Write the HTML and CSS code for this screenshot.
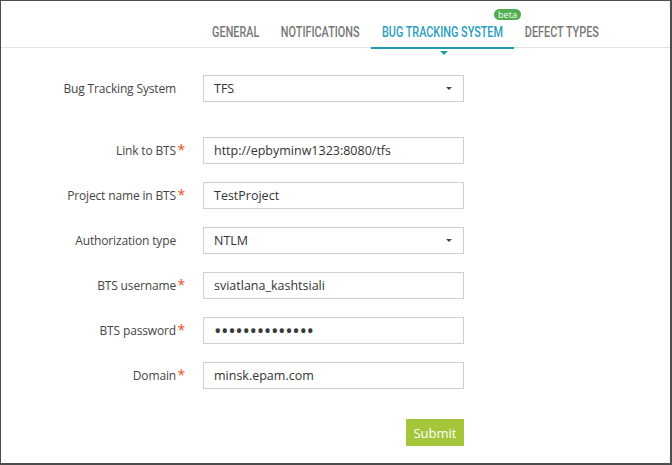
FILE: index.html
```html
<!DOCTYPE html>
<html>
<head>
<meta charset="utf-8">
<link rel="stylesheet" href="styles.css">
</head>
<body>
<div class="frame">
  <div class="header">
    <nav class="tabs">
      <a class="tab t-general"><span class="tab-text">GENERAL</span></a>
      <a class="tab t-notif"><span class="tab-text">NOTIFICATIONS</span></a>
      <a class="tab t-bts active"><span class="tab-text">BUG TRACKING SYSTEM</span><span class="beta">beta</span><span class="caret"></span></a>
      <a class="tab t-defect"><span class="tab-text">DEFECT TYPES</span></a>
    </nav>
  </div>
  <form class="form">
    <div class="row first">
      <label class="label">Bug Tracking System<span class="req"></span></label>
      <div class="field select"><span>TFS</span><span class="arrow"></span></div>
    </div>
    <div class="row">
      <label class="label">Link to BTS<span class="req">*</span></label>
      <div class="field"><span>http://epbyminw1323:8080/tfs</span></div>
    </div>
    <div class="row">
      <label class="label">Project name in BTS<span class="req">*</span></label>
      <div class="field"><span>TestProject</span></div>
    </div>
    <div class="row">
      <label class="label">Authorization type<span class="req"></span></label>
      <div class="field select"><span>NTLM</span><span class="arrow"></span></div>
    </div>
    <div class="row">
      <label class="label">BTS username<span class="req">*</span></label>
      <div class="field"><span>sviatlana_kashtsiali</span></div>
    </div>
    <div class="row">
      <label class="label">BTS password<span class="req">*</span></label>
      <div class="field"><span class="dots">••••••••••••••</span></div>
    </div>
    <div class="row">
      <label class="label">Domain<span class="req">*</span></label>
      <div class="field"><span>minsk.epam.com</span></div>
    </div>
    <div class="actions">
      <button type="button" class="submit">Submit</button>
    </div>
  </form>
</div>
</body>
</html>
```
FILE: styles.css
```css
* { box-sizing: border-box; }
html, body { margin: 0; padding: 0; background: #fff; }
.frame {
  width: 672px;
  height: 465px;
  border-style: solid;
  border-color: #4d4d4d;
  border-width: 1px 2px 2px 1px;
  font-family: "Open Sans", "Liberation Sans", sans-serif;
  background: #fff;
}
.header {
  height: 47px;
  border-bottom: 1px solid #e2e2e2;
}
.tabs {
  display: flex;
  height: 46px;
  padding-left: 201px;
}
.tab {
  position: relative;
  display: flex;
  align-items: flex-end;
  justify-content: center;
  height: 48px;
  padding: 0 0 6px;
  font-family: Roboto, "DejaVu Sans", sans-serif;
  font-size: 15.5px;
  font-weight: 500;
  color: #767676;
  border-bottom: 2px solid transparent;
  white-space: nowrap;
}
.tab-text {
  display: inline-block;
  transform: scaleX(0.7);
  transform-origin: 50% 50%;
}
.t-general { width: 68px; }
.t-notif { width: 101px; }
.t-bts { width: 143px; }
.t-defect { width: 95px; }
.tab.active {
  color: #2aa0bf;
  border-bottom-color: #1c9bb0;
}
.beta {
  position: absolute;
  top: 8px;
  left: 123px;
  width: 27px;
  height: 11px;
  border-radius: 6px;
  background: #4fae4f;
  color: #fff;
  font-family: "Open Sans", sans-serif;
  font-weight: 400;
  font-size: 9px;
  line-height: 11px;
  text-align: center;
}
.caret {
  position: absolute;
  left: 69px;
  bottom: -8px;
  width: 0;
  height: 0;
  border-left: 4px solid transparent;
  border-right: 4px solid transparent;
  border-top: 4px solid #1c9bb0;
}
.form {
  padding-top: 27px;
  display: flex;
  flex-direction: column;
  gap: 18px;
}
.row {
  display: grid;
  grid-template-columns: 184px 261px;
  column-gap: 18px;
  align-items: center;
  height: 27px;
}
.row.first { margin-bottom: 17px; }
.label {
  text-align: right;
  font-size: 12px;
  letter-spacing: -0.15px;
  color: #454545;
  white-space: nowrap;
}
.req {
  display: inline-block;
  width: 9px;
  text-align: right;
  color: #e8521e;
  font-weight: 400;
  font-size: 14px;
  line-height: 1;
}
.field {
  height: 27px;
  border: 1px solid #cfcfcf;
  padding: 0 10px;
  display: flex;
  align-items: center;
  justify-content: space-between;
  font-size: 12.5px;
  color: #333;
}
.arrow {
  width: 0;
  height: 0;
  border-left: 3px solid transparent;
  border-right: 3px solid transparent;
  border-top: 3px solid #444;
  margin-right: 1px;
}
.dots {
  font-size: 20px;
  letter-spacing: -0.4px;
  color: #3a3a3a;
  line-height: 1;
}
.actions {
  display: flex;
  padding-left: 405px;
  margin-top: 12px;
}
.submit {
  width: 58px;
  height: 27px;
  border: none;
  background: #a5c63b;
  color: #fff;
  font-family: "Open Sans", sans-serif;
  font-size: 13px;
  padding: 0;
}
```
